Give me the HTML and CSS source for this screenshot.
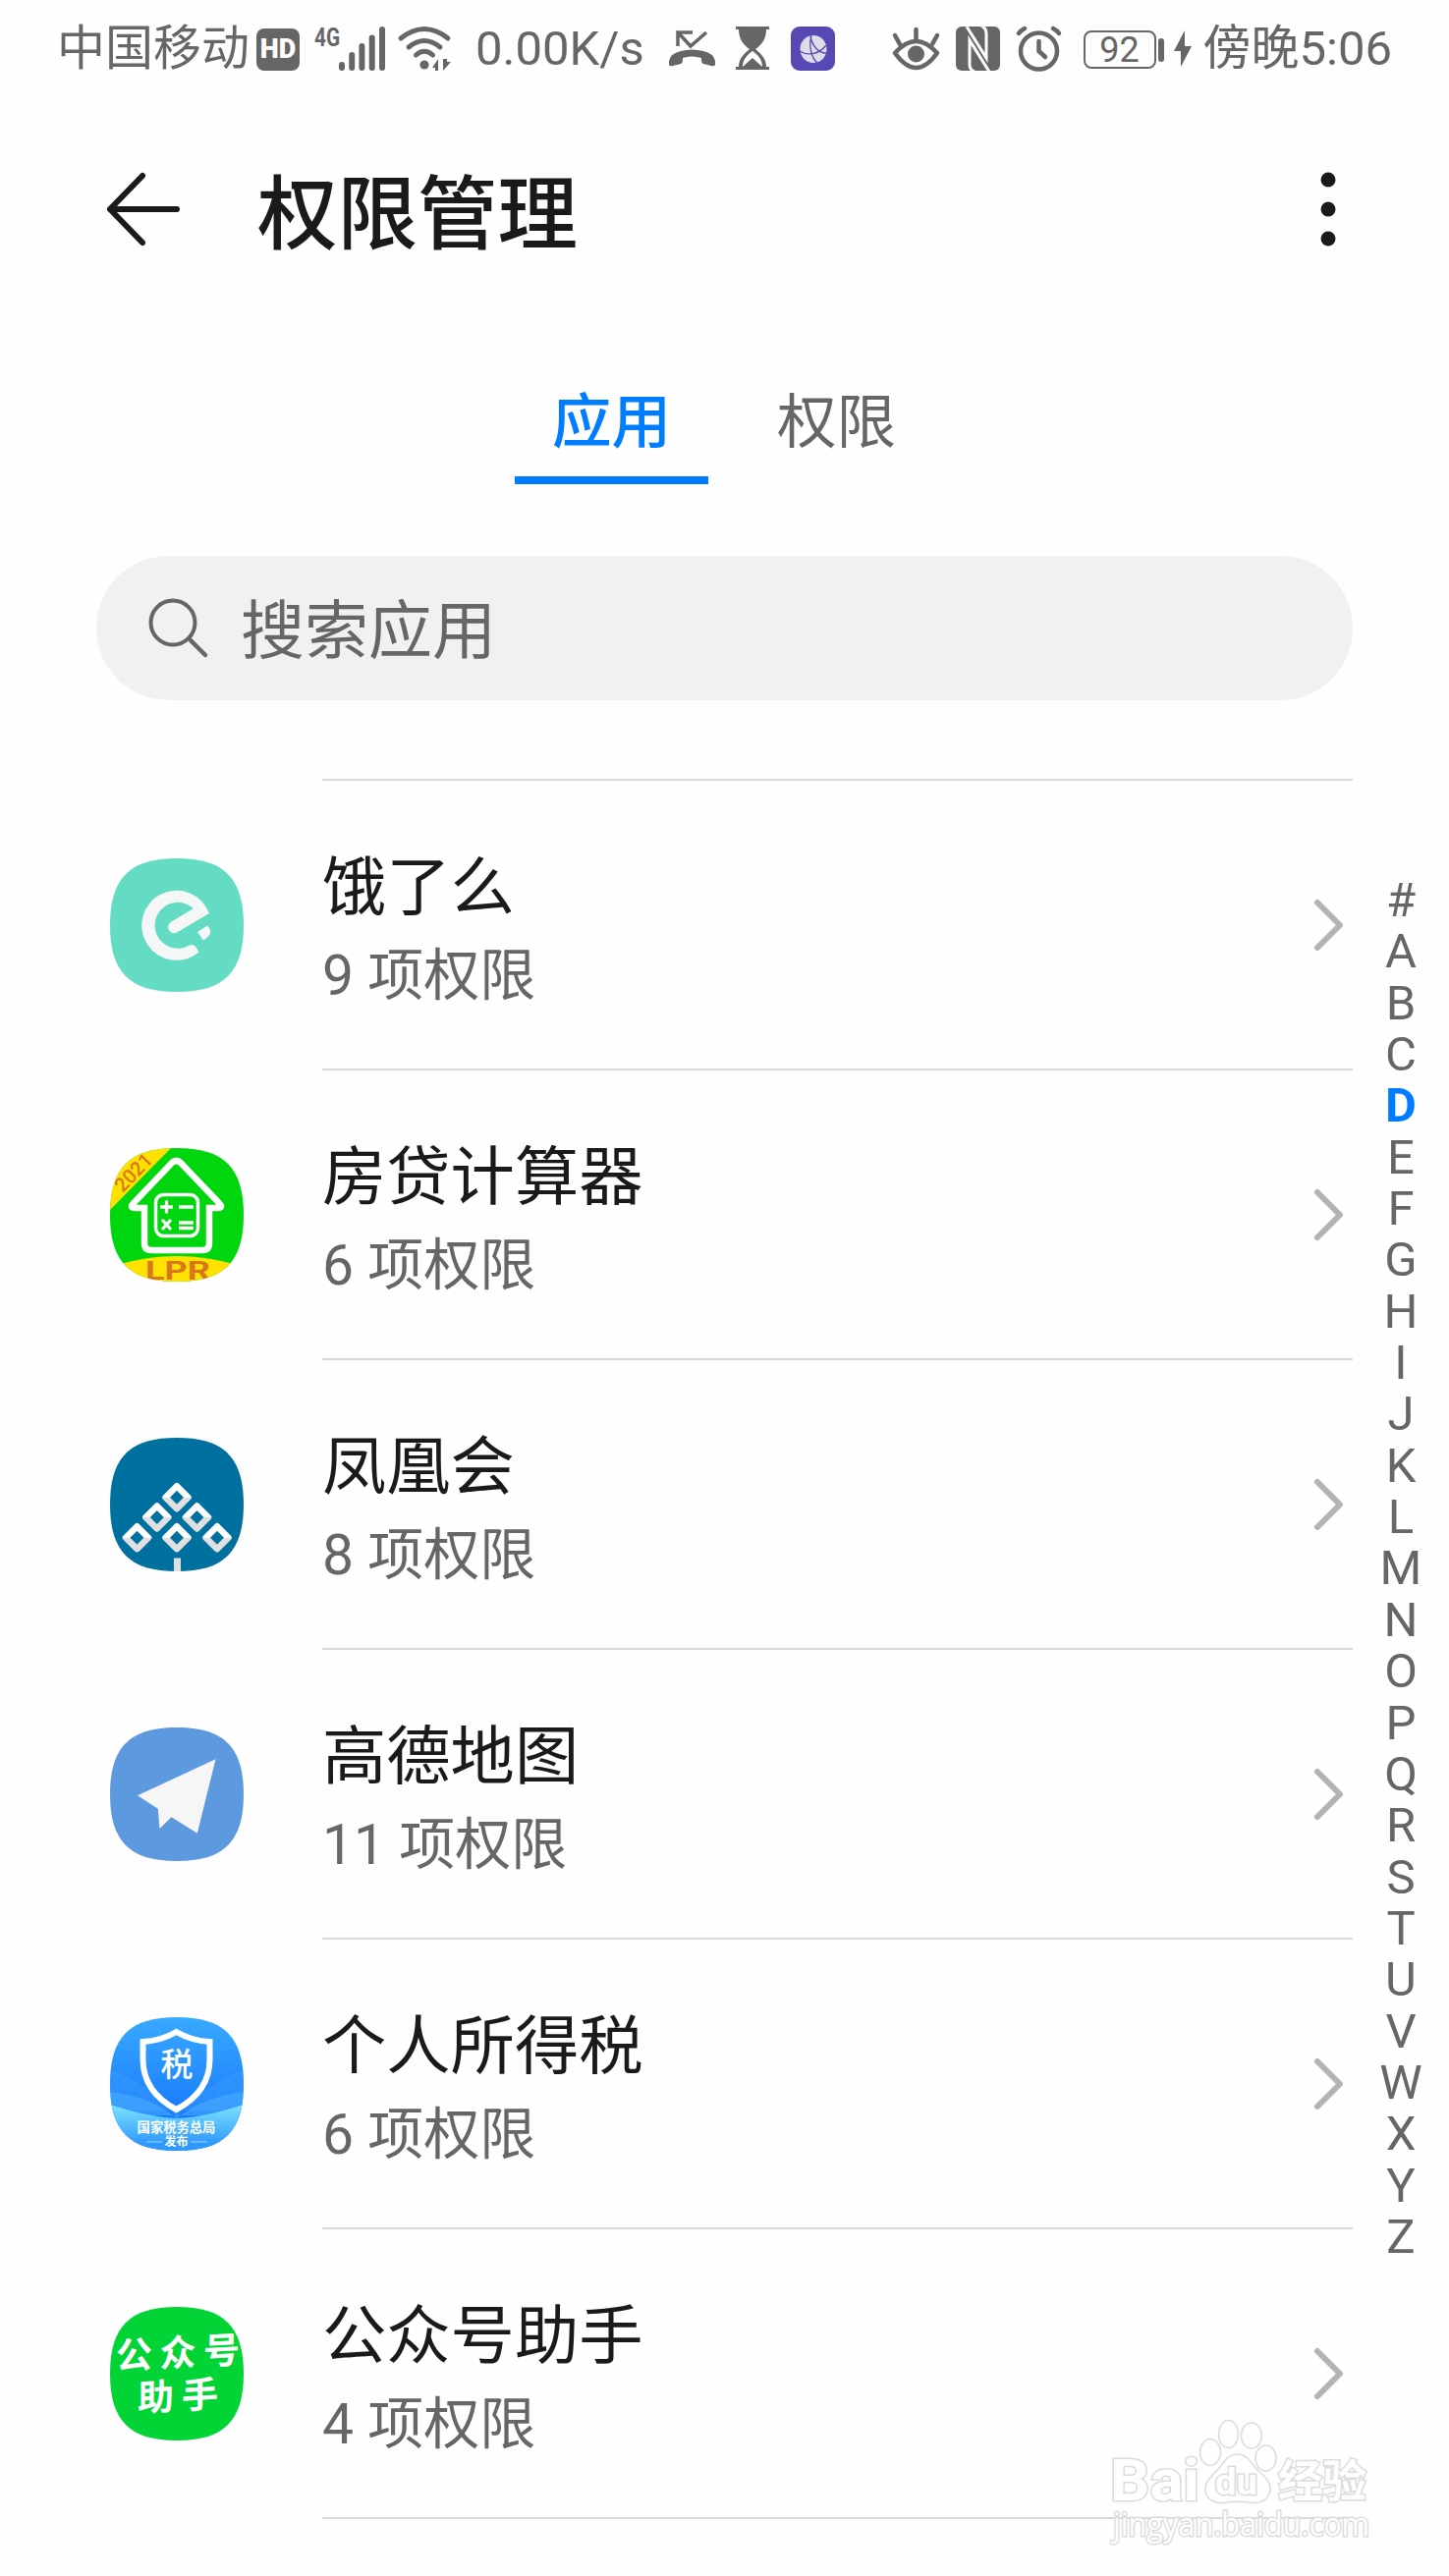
FILE: index.html
```html
<!DOCTYPE html>
<html lang="zh-CN">
<head>
    <meta charset="UTF-8">
    <meta name="viewport" content="width=device-width, initial-scale=1.0">
    <title>权限管理</title>
    <link rel="stylesheet" href="styles.css">
</head>
<body>
    <div class="status-bar">
        <div class="status-left">
            <span class="carrier">中国移动</span>
            <span class="hd">HD</span>
            <svg class="signal" width="74" height="46" viewBox="0 0 74 46">
                <text x="0" y="20" font-size="26" font-weight="700" textLength="26" lengthAdjust="spacingAndGlyphs">4G</text>
                <rect x="25" y="36" width="6" height="9" rx="3"/>
                <rect x="35.2" y="26" width="6" height="19" rx="3"/>
                <rect x="45.4" y="17" width="6" height="28" rx="3"/>
                <rect x="55.7" y="8.500" width="6" height="36.500" rx="3"/>
                <rect x="66" y="0" width="6" height="45" rx="3"/>
            </svg>
            <svg class="wifi" width="56" height="46" viewBox="0 0 56 46">
                <g fill="none" stroke="#666" stroke-width="5" stroke-linecap="round">
                    <path d="M3 12Q27 -7 51 12"/>
                    <path d="M11 21Q27 8 43 21"/>
                    <path d="M18.500 29Q27 21.500 35.500 29"/>
                </g>
                <circle cx="27" cy="39" r="4.600"/>
                <path d="M35 42l6-9v12h-3v-3zM46 33v12l8-9h-4v-3z"/>
            </svg>
            <span class="speed">0.00K/s</span>
            <svg class="missed" width="47" height="46" viewBox="0 0 47 46">
                <path d="M9 20V6H24M10 7L22 20L38 6" fill="none" stroke="#666" stroke-width="3.500"/>
                <path d="M0 35Q2 27 12 25Q23 22 35 25Q45 27 47 35V39Q46 41 43 40L35 38Q33 37 33 34V32Q23 29 14 32V34Q14 37 12 38L4 40Q1 41 0 39z"/>
            </svg>
            <svg class="hourglass" width="34" height="46" viewBox="0 0 34 46">
                <path d="M0 0H34V3H31C31 13 26 19 20 23C26 28 31 33 31 41H34V44H0V41H3C3 33 8 28 14 23C8 19 3 13 3 3H0z"/>
                <path d="M7 41C7 34 11 29 17 25C23 29 27 34 27 41L17 32z" fill="#fefefe"/>
            </svg>
            <svg class="browser" width="46" height="46" viewBox="0 0 46 46">
                <rect width="45" height="45" rx="9" fill="#5749b3"/>
                <ellipse cx="23" cy="23" rx="13.500" ry="14" fill="#dedde7"/>
                <path d="M21 9C18 20 21 32 27 37M20 10C22 20 28 27 36 27M9 25C17 30 28 29 36 19" fill="none" stroke="#5749b3" stroke-width="1.300"/>
            </svg>
        </div>
        <div class="status-right">
            <svg class="eye" width="49" height="46" viewBox="0 0 49 46">
                <g fill="none" stroke="#666" stroke-width="4.500" stroke-linecap="round">
                    <path d="M24.500 3V13M3 9L8 18M46 9L41 18"/>
                    <path d="M3 27Q24.500 3 46 27Q24.500 57 3 27z" stroke-linejoin="round"/>
                </g>
                <circle cx="24.500" cy="28" r="8.500"/>
            </svg>
            <svg class="nfc" width="46" height="46" viewBox="0 0 46 46">
                <rect width="45" height="45" rx="6"/>
                <path d="M11 0L31 32V7Q31 2 26 -1M34 46L14 14V39Q14 44 19 46" fill="none" stroke="#fefefe" stroke-width="3"/>
            </svg>
            <svg class="alarm" width="46" height="46" viewBox="0 0 46 46">
                <g fill="none" stroke="#666" stroke-width="4.500" stroke-linecap="round">
                    <circle cx="22.500" cy="25" r="18.500"/>
                    <path d="M22.500 15V25L29 31"/>
                    <path d="M2 7Q4 4 8 2M43 7Q41 4 37 2"/>
                </g>
            </svg>
            <span class="battery">92</span>
            <svg class="bolt" width="18" height="46" viewBox="0 0 18 46">
                <path d="M11 4L0 25H7V41L18 20H11z"/>
            </svg>
            <span class="clock">傍晚5:06</span>
        </div>
    </div>

    <div class="header">
        <svg class="back" width="76" height="76" viewBox="0 0 76 76">
            <path d="M37 4L4 38L37 72M4 38H72" fill="none" stroke="#1a1a1a" stroke-width="6" stroke-linecap="round" stroke-linejoin="round"/>
        </svg>
        <h1>权限管理</h1>
        <svg class="more" width="16" height="76" viewBox="0 0 16 76">
            <circle cx="8" cy="8" r="7.500"/>
            <circle cx="8" cy="38" r="7.500"/>
            <circle cx="8" cy="68" r="7.500"/>
        </svg>
    </div>

    <div class="tabs">
        <div class="tab active">应用</div>
        <div class="tab">权限</div>
    </div>

    <div class="search">
        <svg width="62" height="62" viewBox="0 0 62 62">
            <path d="M43 43L58 58" fill="none" stroke="#666" stroke-width="4.500" stroke-linecap="round"/>
            <circle cx="25" cy="25" r="22.500" fill="none" stroke="#666" stroke-width="4"/>
        </svg>
        <span>搜索应用</span>
    </div>

    <div class="content">
        <div class="app-list">
            <div class="app-row">
                <svg class="app-icon" viewBox="0 0 136 136">
                    <defs>
                        <clipPath id="shape"><path d="M68 0C116 0 136 20 136 68S116 136 68 136S0 116 0 68S20 0 68 0z"/></clipPath>
                    </defs>
                    <g clip-path="url(#shape)">
                        <rect width="136" height="136" fill="#64dcc3"/>
                        <path d="M101 56A35.500 35.500 0 1 0 90.500 95.500L87.500 90.500Q85 87 81 88.500A23.500 23.500 0 1 1 85 51L62.500 64.500A5.800 5.800 0 0 0 68 75.500z" fill="#f5f7f7"/>
                        <path d="M89 75L99 68.500Q107 76 95 83.500z" fill="#f5f7f7"/>
                    </g>
                </svg>
                <div class="app-info">
                    <div class="app-name">饿了么</div>
                    <div class="app-count">9 项权限</div>
                </div>
                <svg class="chevron" viewBox="0 0 30 52"><path d="M3 3L26 26L3 49"/></svg>
            </div>

            <div class="app-row">
                <svg class="app-icon" viewBox="0 0 136 136">
                    <g clip-path="url(#shape)">
                        <rect width="136" height="136" fill="#00d60d"/>
                        <path d="M0 0H62L0 63z" fill="#ffe100"/>
                        <path d="M0 121Q68 99 136 121V136H0z" fill="#ffe100"/>
                        <text class="year" transform="translate(13 46) rotate(-46)">2021</text>
                        <text class="lpr" x="36" y="134" textLength="66" lengthAdjust="spacingAndGlyphs">LPR</text>
                        <path d="M35 61H26Q19 61 24 56L63 15Q67.500 11 72 15L111 56Q116 61 109 61H101V97Q101 104 94 104H42Q35 104 35 97z" fill="none" stroke="#fff" stroke-width="6.500"/>
                        <rect x="46.500" y="47.500" width="43" height="42" rx="8" fill="none" stroke="#fff" stroke-width="3.500"/>
                        <path d="M51 60H64M57.500 53.500V66.500M70 60H85M53 73L62 83M62 73L53 83M70 76H85M70 81.500H85" stroke="#fff" stroke-width="3.300"/>
                    </g>
                </svg>
                <div class="app-info">
                    <div class="app-name">房贷计算器</div>
                    <div class="app-count">6 项权限</div>
                </div>
                <svg class="chevron" viewBox="0 0 30 52"><path d="M3 3L26 26L3 49"/></svg>
            </div>

            <div class="app-row">
                <svg class="app-icon" viewBox="0 0 136 136">
                    <defs>
                        <linearGradient id="tile" x1="0" y1="0" x2="0" y2="1">
                            <stop offset="0.500" stop-color="#fff"/>
                            <stop offset="0.500" stop-color="#e0e0e0"/>
                        </linearGradient>
                        <path id="diamond" d="M0 -11.500L11.500 0L0 11.500L-11.500 0z" fill="none" stroke="url(#tile)" stroke-width="6.500" stroke-linejoin="round"/>
                    </defs>
                    <g clip-path="url(#shape)">
                        <rect width="136" height="136" fill="#00709f"/>
                        <use href="#diamond" x="68" y="60.700"/>
                        <use href="#diamond" x="47.800" y="81"/>
                        <use href="#diamond" x="88.500" y="81"/>
                        <use href="#diamond" x="27.500" y="101.700"/>
                        <use href="#diamond" x="68" y="101.700"/>
                        <use href="#diamond" x="109" y="101.700"/>
                        <rect x="65" y="122.500" width="7" height="14" fill="#e0e0e0"/>
                    </g>
                </svg>
                <div class="app-info">
                    <div class="app-name">凤凰会</div>
                    <div class="app-count">8 项权限</div>
                </div>
                <svg class="chevron" viewBox="0 0 30 52"><path d="M3 3L26 26L3 49"/></svg>
            </div>

            <div class="app-row">
                <svg class="app-icon" viewBox="0 0 136 136">
                    <g clip-path="url(#shape)">
                        <rect width="136" height="136" fill="#5c99df"/>
                        <path d="M28 69.300L107.500 32.300L88.800 107.700L62.500 91.300L50.500 103L48.800 82.700z" fill="#f6f6f6"/>
                    </g>
                </svg>
                <div class="app-info">
                    <div class="app-name">高德地图</div>
                    <div class="app-count">11 项权限</div>
                </div>
                <svg class="chevron" viewBox="0 0 30 52"><path d="M3 3L26 26L3 49"/></svg>
            </div>

            <div class="app-row">
                <svg class="app-icon" viewBox="0 0 136 136">
                    <defs>
                        <linearGradient id="sky" x1="0" y1="0" x2="0" y2="1">
                            <stop offset="0" stop-color="#38aaff"/>
                            <stop offset="0.750" stop-color="#1879fb"/>
                        </linearGradient>
                        <linearGradient id="wave" x1="0" y1="0" x2="0" y2="1">
                            <stop offset="0" stop-color="#7ce2ff"/>
                            <stop offset="0.850" stop-color="#2f98fb"/>
                        </linearGradient>
                    </defs>
                    <g clip-path="url(#shape)">
                        <rect width="136" height="136" fill="url(#sky)"/>
                        <path d="M0 54Q50 72 68 103Q88 72 136 54V95H0z" fill="#3fa4ff" opacity="0.350"/>
                        <path d="M0 76Q45 82 68 103Q92 82 136 76V100H0z" fill="#4fb4ff" opacity="0.500"/>
                        <path d="M0 89Q40 102 68 103Q96 102 136 89V136H0z" fill="url(#wave)"/>
                        <path d="M67.500 15Q83 24 101.500 25V43C101.500 66 90 82 67.500 94C45 82 33.500 66 33.500 43V25Q52 24 67.500 15z" fill="none" stroke="#fff" stroke-width="6"/>
                        <text class="tax" x="68" y="60">税</text>
                        <text class="bureau" x="67.500" y="117">国家税务总局</text>
                        <text class="bureau small" x="67.500" y="131">发布</text>
                        <path d="M37 127H53M82 127H99" stroke="#9fd3ff" stroke-width="1"/>
                    </g>
                </svg>
                <div class="app-info">
                    <div class="app-name">个人所得税</div>
                    <div class="app-count">6 项权限</div>
                </div>
                <svg class="chevron" viewBox="0 0 30 52"><path d="M3 3L26 26L3 49"/></svg>
            </div>

            <div class="app-row">
                <svg class="app-icon" viewBox="0 0 136 136">
                    <g clip-path="url(#shape)">
                        <rect width="136" height="136" fill="#02d435"/>
                        <text class="helper" transform="translate(69 60) skewY(-3)" textLength="126">公众号</text>
                        <text class="helper" transform="translate(69 104) skewY(-3)" textLength="82">助手</text>
                    </g>
                </svg>
                <div class="app-info">
                    <div class="app-name">公众号助手</div>
                    <div class="app-count">4 项权限</div>
                </div>
                <svg class="chevron" viewBox="0 0 30 52"><path d="M3 3L26 26L3 49"/></svg>
            </div>
        </div>

        <div class="letters">
            <span>#</span>
            <span>A</span>
            <span>B</span>
            <span>C</span>
            <span class="current">D</span>
            <span>E</span>
            <span>F</span>
            <span>G</span>
            <span>H</span>
            <span>I</span>
            <span>J</span>
            <span>K</span>
            <span>L</span>
            <span>M</span>
            <span>N</span>
            <span>O</span>
            <span>P</span>
            <span>Q</span>
            <span>R</span>
            <span>S</span>
            <span>T</span>
            <span>U</span>
            <span>V</span>
            <span>W</span>
            <span>X</span>
            <span>Y</span>
            <span>Z</span>
        </div>
    </div>

    <svg class="watermark" width="275" height="135" viewBox="0 0 275 135">
        <text class="brand" x="5" y="86" font-size="59" textLength="91" lengthAdjust="spacingAndGlyphs">Bai</text>
        <ellipse cx="107" cy="37" rx="10.500" ry="13.500"/>
        <ellipse cx="125.500" cy="18.500" rx="10" ry="14"/>
        <ellipse cx="149" cy="20" rx="10.500" ry="13"/>
        <ellipse cx="163.500" cy="43" rx="10.500" ry="13"/>
        <path d="M135 39C145 39 148 48 156 56C164 63 169 68 168 76C166 87 156 90 146 88C137 87 131 87 124 88C112 90 102 86 102 74C102 65 111 60 117 52C122 45 126 39 135 39z"/>
        <text class="brand" x="112" y="80" font-size="36" textLength="43" lengthAdjust="spacingAndGlyphs">du</text>
        <text class="brand" x="176" y="83" font-size="45" textLength="90">经验</text>
        <text class="url" x="8" y="122" textLength="261" lengthAdjust="spacingAndGlyphs">jingyan.baidu.com</text>
    </svg>
</body>
</html>
```

FILE: styles.css
```css
* {
    margin: 0;
    padding: 0;
    box-sizing: border-box;
}

body {
    position: relative;
    width: 1475px;
    height: 2623px;
    overflow: hidden;
    background: #fefefe;
    color: #1a1a1a;
    font-family: Roboto, "Noto Sans CJK SC", sans-serif;
}

svg {
    display: block;
    flex-shrink: 0;
    overflow: visible;
}

/* status bar */
.status-bar {
    display: flex;
    justify-content: space-between;
    height: 100px;
    padding: 0 58px 0 58px;
    color: #666;
    fill: #666;
    font-size: 49px;
    line-height: 102px;
    white-space: nowrap;
}

.status-left,
.status-right {
    display: flex;
    align-items: center;
}

.carrier {
    width: 194px;
}

.hd {
    width: 44px;
    height: 43px;
    margin-left: 9px;
    border-radius: 8px;
    background: #666;
    color: #fefefe;
    font-size: 27px;
    font-weight: 900;
    line-height: 43px;
    text-align: center;
}

.signal {
    margin-left: 15px;
}

.wifi {
    margin-left: 11px;
}

.speed {
    width: 174px;
    margin-left: 23px;
}

.missed {
    margin-left: 23px;
}

.hourglass {
    margin-left: 21px;
}

.browser {
    margin-left: 22px;
}

.nfc {
    margin-left: 16px;
}

.alarm {
    margin-left: 16px;
}

.battery {
    position: relative;
    width: 74px;
    height: 39px;
    margin-left: 22px;
    border: 2px solid #666;
    border-radius: 8px;
    font-size: 36px;
    line-height: 36px;
    text-align: center;
}

.battery::after {
    content: '';
    position: absolute;
    top: 6px;
    right: -10px;
    width: 6px;
    height: 24px;
    border-radius: 3px;
    background: #666;
}

.bolt {
    margin-left: 18px;
}

.clock {
    margin-left: 12px;
}

/* header */
.header {
    display: flex;
    align-items: center;
    height: 226px;
    padding: 0 115px 0 108px;
}

.header h1 {
    flex: 1;
    margin-left: 78px;
    padding-top: 11px;
    font-size: 81.5px;
    font-weight: 500;
    line-height: 120px;
}

.more {
    fill: #1a1a1a;
}

/* tabs */
.tabs {
    display: flex;
    gap: 32px;
    height: 167px;
    padding-left: 524px;
}

.tab {
    width: 197px;
    height: 100px;
    margin-top: 67px;
    border-bottom: 8px solid transparent;
    color: #666;
    font-size: 60.5px;
    line-height: 75px;
    text-align: center;
}

.tab.active {
    border-color: #007dff;
    color: #007dff;
    font-weight: 500;
}

/* search */
.search {
    display: flex;
    align-items: center;
    height: 147px;
    margin: 73px 98px 0;
    padding-left: 53px;
    border-radius: 74px;
    background: #f1f1f1;
    color: #666;
    font-size: 65px;
    line-height: 147px;
}

.search span {
    margin-left: 32px;
    padding-top: 7px;
}

/* list */
.content {
    display: flex;
    margin-top: 80px;
}

.app-list {
    width: 1377px;
    padding-left: 112px;
}

.app-row {
    display: flex;
    align-items: center;
    height: 295px;
    padding-top: 2px;
    background: linear-gradient(#dadada, #dadada) right top / 1049px 2px no-repeat;
}

.app-row:last-child {
    height: 297px;
    padding-bottom: 2px;
    background: linear-gradient(#dadada, #dadada) right top / 1049px 2px no-repeat,
        linear-gradient(#dadada, #dadada) right bottom / 1049px 2px no-repeat;
}

.app-icon {
    width: 136px;
    height: 136px;
}

.app-info {
    flex: 1;
    margin-left: 80px;
    padding-top: 14px;
}

.app-name {
    font-size: 65.3px;
    line-height: 90px;
}

.app-count {
    color: #666;
    font-size: 57px;
    line-height: 90px;
}

.chevron {
    width: 30px;
    height: 52px;
    margin-right: 9px;
    fill: none;
    stroke: #b3b3b3;
    stroke-width: 6;
    stroke-linecap: round;
    stroke-linejoin: round;
}

.year {
    fill: #d9771c;
    font-size: 20px;
    font-weight: 500;
}

.lpr {
    fill: #d9771c;
    font-size: 26px;
    font-weight: 700;
}

.tax,
.bureau,
.helper {
    fill: #fff;
    font-weight: 700;
    text-anchor: middle;
}

.tax {
    font-size: 33px;
    font-weight: 500;
}

.bureau {
    font-size: 13.3px;
}

.bureau.small {
    font-size: 12px;
}

.helper {
    font-size: 37px;
}

/* letter index */
.letters {
    display: flex;
    flex-direction: column;
    align-items: center;
    width: 98px;
    margin-top: 98px;
    color: #666;
    font-size: 49px;
    line-height: 52.35px;
}

.letters .current {
    color: #007dff;
    font-weight: 700;
}

/* watermark */
.watermark {
    position: absolute;
    left: 1125px;
    top: 2460px;
    fill: #fefefe;
    stroke: #dcdcdc;
    stroke-width: 1.5;
}

.watermark text {
    paint-order: stroke;
    stroke-width: 3;
}

.brand {
    font-weight: 700;
}

.url {
    font-family: "Open Sans", sans-serif;
    font-size: 32px;
}
```
